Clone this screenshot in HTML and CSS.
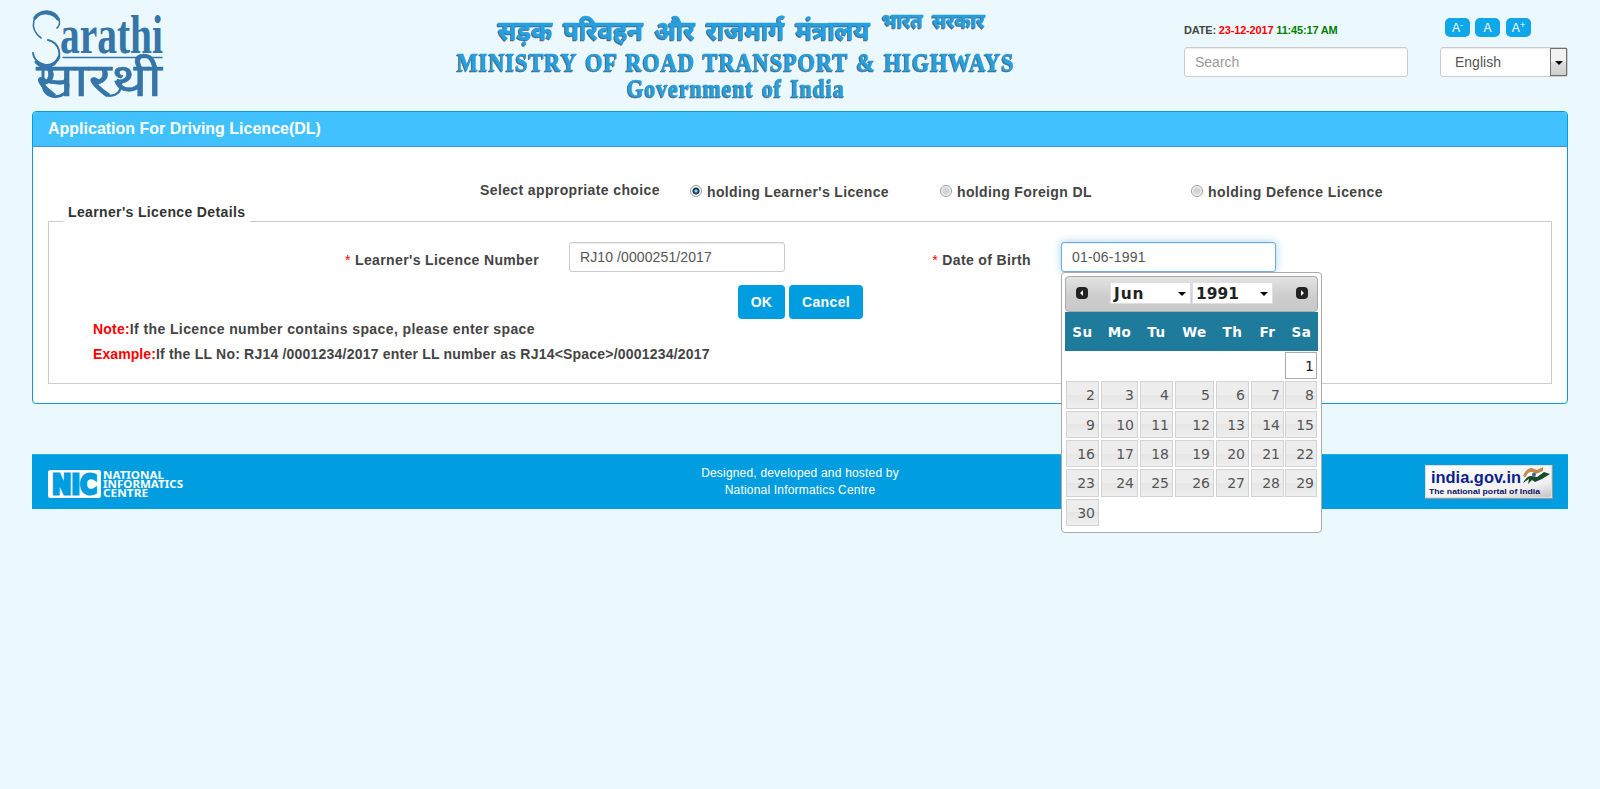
FILE: index.html
```html
<!DOCTYPE html>
<html lang="en">
<head>
<meta charset="utf-8">
<title>Application For Driving Licence(DL)</title>
<link rel="stylesheet" href="styles.css">
</head>
<body>
<header class="top">
  <svg class="logo" width="136" height="105" viewBox="28 0 136 105">
    <text class="logo-en" x="60" y="53" font-size="54" textLength="103" lengthAdjust="spacingAndGlyphs">arathi</text>
    <g fill="none" stroke="#3575a8" stroke-linecap="round">
      <path d="M57 28C62 25 60 12 47 11C33 11 28 28 41 38" stroke-width="1.6"/>
      <path d="M35 18C40 11 52 11 58 19" stroke-width="3.5"/>
      <path d="M48 40C60 43 62 56 56 61C47 70 34 62 33 53" stroke-width="2"/>
      <path d="M63 57.500H162" stroke-width="1.5"/>
      <path d="M36 62C43 70 54 68 59 57" stroke-width="3"/>
      <path d="M43 66V84C43 101 67 100 68 86Q68 82 65 80" stroke-width="3"/>
      <path d="M100 88C103 99 120 98 121 86Q121 82 118 80" stroke-width="2.5"/>
    </g>
    <text class="logo-hi" x="36" y="96" font-size="46" textLength="126" lengthAdjust="spacingAndGlyphs">सारथी</text>
  </svg>
  <svg class="ministry" width="570" height="104" viewBox="450 0 570 104">
    <text class="hindi" x="498" y="39.500" font-size="27" textLength="372" lengthAdjust="spacingAndGlyphs">सड़क परिवहन और राजमार्ग मंत्रालय</text>
    <text class="hindi" x="882" y="27.500" font-size="21" textLength="103" lengthAdjust="spacingAndGlyphs">भारत सरकार</text>
    <text class="latin" x="457" y="71" font-size="26" textLength="558" lengthAdjust="spacingAndGlyphs">MINISTRY OF ROAD TRANSPORT &amp; HIGHWAYS</text>
    <text class="latin" x="627" y="97" font-size="25" textLength="218" lengthAdjust="spacingAndGlyphs">Government of India</text>
  </svg>
  <div class="search">
    <div class="date">DATE: <span class="red">23-12-2017</span> <span class="green">11:45:17 AM</span></div>
    <div class="input placeholder">Search</div>
  </div>
  <div class="lang">
    <div class="sizes"><span>A<sup>-</sup></span><span>A</span><span>A<sup>+</sup></span></div>
    <div class="select">English<span class="arrow"></span></div>
  </div>
</header>

<main class="panel">
  <h1 class="panel-title">Application For Driving Licence(DL)</h1>
  <div class="panel-body">
    <div class="choices">
      <span class="question">Select appropriate choice</span>
      <label class="choice"><i class="radio on"></i>holding Learner's Licence</label>
      <label class="choice"><i class="radio"></i>holding Foreign DL</label>
      <label class="choice defence"><i class="radio"></i>holding Defence Licence</label>
    </div>
    <section class="details">
      <h2 class="legend"><span>Learner's Licence Details</span></h2>
      <div class="fields">
        <span class="label"><b>*</b> Learner's Licence Number</span>
        <div class="input number">RJ10 /0000251/2017</div>
        <span class="label"><b>*</b> Date of Birth</span>
        <div class="input focus">01-06-1991
          <div class="picker">
            <div class="picker-head">
              <svg width="12" height="12" viewBox="0 0 12 12"><rect width="12" height="12" rx="4" fill="#222"/><path d="M7 3L4 6L7 9Z" fill="#fff"/></svg>
              <span class="drop month">Jun</span><span class="drop">1991</span>
              <svg width="12" height="12" viewBox="0 0 12 12"><rect width="12" height="12" rx="4" fill="#222"/><path d="M5 3L8 6L5 9Z" fill="#fff"/></svg>
            </div>
            <div class="week"><span>Su</span><span>Mo</span><span>Tu</span><span>We</span><span>Th</span><span>Fr</span><span>Sa</span></div>
            <div class="days">
              <a class="first">1</a>
              <a>2</a><a>3</a><a>4</a><a>5</a><a>6</a><a>7</a><a>8</a>
              <a>9</a><a>10</a><a>11</a><a>12</a><a>13</a><a>14</a><a>15</a>
              <a>16</a><a>17</a><a>18</a><a>19</a><a>20</a><a>21</a><a>22</a>
              <a>23</a><a>24</a><a>25</a><a>26</a><a>27</a><a>28</a><a>29</a>
              <a>30</a>
            </div>
          </div>
        </div>
      </div>
      <div class="buttons"><span class="ok">OK</span><span class="cancel">Cancel</span></div>
      <p class="note"><span class="red">Note:</span>If the Licence number contains space, please enter space</p>
      <p class="note example"><span class="red">Example:</span>If the LL No: RJ14 /0001234/2017 enter LL number as RJ14&lt;Space&gt;/0001234/2017</p>
    </section>
  </div>
</main>

<footer class="footer">
  <svg class="nic" width="140" height="36" viewBox="47 466 140 36">
    <rect x="48" y="470" width="53" height="28" rx="2.5" fill="#fff"/>
    <text class="nic-mark" x="52" y="493.500" font-size="26" textLength="45" lengthAdjust="spacingAndGlyphs">NIC</text>
    <g class="nic-name" font-size="10.5">
      <text x="103" y="478.5" textLength="61" lengthAdjust="spacingAndGlyphs">NATIONAL</text>
      <text x="103" y="487.5" textLength="80" lengthAdjust="spacingAndGlyphs">INFORMATICS</text>
      <text x="103" y="496.7" textLength="45" lengthAdjust="spacingAndGlyphs">CENTRE</text>
    </g>
  </svg>
  <div class="credit">Designed, developed and hosted by<br>National Informatics Centre</div>
  <svg class="portal" width="128" height="34" viewBox="1425 465 128 34">
    <defs><linearGradient id="silver" x1="0" y1="0" x2="1" y2="1"><stop offset="0" stop-color="#fff"/><stop offset=".75" stop-color="#f0f0f0"/><stop offset="1" stop-color="#c4c4c4"/></linearGradient></defs>
    <rect x="1425" y="465" width="128" height="34" fill="#999"/>
    <rect x="1425" y="465" width="127" height="33" fill="#ddd"/>
    <rect x="1426" y="466" width="125" height="31" rx="2" fill="url(#silver)"/>
    <text class="portal-name" x="1431" y="483" font-size="17" textLength="90" lengthAdjust="spacingAndGlyphs">india.gov.in</text>
    <text class="portal-sub" x="1429" y="494" font-size="8" textLength="111" lengthAdjust="spacingAndGlyphs">The national portal of India</text>
    <path d="M1523 476Q1526 468 1532 468L1537 470L1543 467V471L1536 474L1531 472Q1528 473 1526 478Z" fill="#c98a4c"/>
    <path d="M1525 478Q1528 471 1532 472L1537 474L1544 471V474L1537 478L1532 476L1527 480Z" fill="#fff"/>
    <circle cx="1534" cy="474.500" r="2" fill="#4860a0"/>
    <path d="M1523 483Q1527 475 1532 476L1537 477L1544 472L1550 474L1542 479L1535 482L1532 480L1528 484L1529 479Z" fill="#174c2c"/>
  </svg>
</footer>
</body>
</html>
```
FILE: styles.css
```css
* { box-sizing: border-box; }
body {
  margin: 0;
  padding: 0 32px;
  height: 789px;
  background: #ebf9ff;
  color: #444;
  font: 14px/20px "Liberation Sans", Arial, sans-serif;
}
svg { overflow: visible; }
.red { color: #f00; }
.green { color: #008000; }

/* Page header */
.top {
  height: 111px;
  display: grid;
  grid-template-columns: 418px 734px 256px 128px;
}
.logo { margin: 0 0 0 -4px; }
.logo text { fill: #3575a8; }
.logo-en { font-family: "Liberation Serif", serif; font-weight: bold; }
.logo-hi { font-family: "Noto Sans Devanagari", "Liberation Serif", serif; font-weight: normal; stroke: #3575a8; stroke-width: .6px; }
.ministry text { fill: #25a0e0; stroke: #25a0e0; stroke-width: .4px; filter: drop-shadow(-1px 1px .6px #567); }
.hindi { font-family: "Noto Sans Devanagari", "Liberation Sans", sans-serif; font-weight: bold; word-spacing: 5px; }
.latin { font-family: "Liberation Serif", serif; font-weight: bold; letter-spacing: 1.2px; word-spacing: 2px; }
.date {
  margin-top: 20px;
  height: 27px;
  font-size: 11px;
  font-weight: bold;
  letter-spacing: -.17px;
  white-space: nowrap;
}
.input, .select {
  height: 30px;
  padding: 0 10px;
  border: 1px solid #ccc;
  border-radius: 3px;
  background: #fff;
  box-shadow: inset 0 1px 1px rgba(0, 0, 0, .075);
  color: #555;
  line-height: 28px;
}
.placeholder { width: 224px; color: #999; }
.sizes { display: flex; gap: 5px; padding: 18px 0 10px 5px; }
.sizes span {
  width: 25px;
  height: 19px;
  border-radius: 5px;
  background: #0ea7e9;
  color: #fff;
  font-size: 12px;
  line-height: 20px;
  text-align: center;
}
.sizes span:last-child { margin-left: 1px; }
.sizes sup { font-size: 9px; line-height: 0; vertical-align: 4px; }
.select {
  display: flex;
  justify-content: space-between;
  padding: 0 0 0 14px;
}
.arrow {
  width: 17px;
  height: 28px;
  border: 1px solid #707070;
  background: linear-gradient(#f2f2f2 50%, #ddd 50%, #cfcfcf);
}
.arrow::after {
  content: "";
  display: block;
  margin: 12px 0 0 4px;
  width: 0;
  border: 4px solid transparent;
  border-top: 4px solid #000;
  border-bottom: 0;
}

/* Application panel */
.panel {
  height: 293px;
  border: 1px solid #0d9bdc;
  border-radius: 4px;
  background: #fff;
  font-weight: bold;
  letter-spacing: .36px;
}
.panel-title {
  margin: 0;
  height: 35px;
  padding-left: 15px;
  border-bottom: 1px solid #3a94d0;
  border-radius: 3px 3px 0 0;
  background: #41c2ff;
  color: #fff;
  font-size: 16px;
  line-height: 33px;
  letter-spacing: 0;
}
.panel-body { padding: 33px 15px 0; }
.choices {
  display: grid;
  grid-template-columns: 210px 250px 251px 1fr;
  padding-left: 432px;
  height: 41px;
  line-height: 21px;
}
.question { letter-spacing: .38px; }
.choice { display: flex; padding-top: 2px; }
.defence { letter-spacing: .44px; }
.radio {
  width: 12px;
  height: 12px;
  margin: 3px 5px 0 0;
  border: 1px solid #999;
  border-radius: 50%;
  background: radial-gradient(circle, #d2d4d8 0 3px, #fff 5px);
}
.radio.on { background: radial-gradient(circle at 50% 50%, #8bd2f2 0 1px, #16537c 2px, #103040 3px, #fff 4px); }
.details {
  height: 163px;
  border: 1px solid #ccc;
}
.legend { margin: -20px 0 0 14px; font-size: 14px; line-height: 20px; color: #333; }
.legend span { display: inline-block; width: 187px; height: 21px; padding-left: 5px; background: #fff; vertical-align: top; }
.fields {
  display: grid;
  grid-template-columns: 520px 216px 276px 215px;
  margin-top: 19px;
  height: 30px;
}
.label { padding: 8px 30px 0 0; text-align: right; }
.label b { color: #f00; font-weight: normal; }
.fields .input { font-weight: normal; letter-spacing: .2px; }
.fields .number { letter-spacing: .1px; }
.fields .focus {
  position: relative;
  border-color: #66afe9;
  box-shadow: inset 0 1px 1px rgba(0, 0, 0, .075), 0 0 8px rgba(102, 175, 233, .6);
}
.buttons { display: flex; gap: 4px; margin: 13px 0 0 689px; }
.buttons span {
  height: 34px;
  border-radius: 4px;
  background: #009ee0;
  color: #fff;
  line-height: 34px;
  text-align: center;
}
.ok { width: 47px; }
.cancel { width: 74px; }
.note { margin: 0 0 5px 44px; letter-spacing: .4px; }
.note .red { letter-spacing: .2px; }
.example { letter-spacing: .21px; }
.example .red { letter-spacing: .08px; }

/* Date picker */
.picker {
  position: absolute;
  left: -1px;
  top: 29px;
  width: 261px;
  height: 261px;
  padding: 3px;
  border: 1px solid #aaa;
  border-radius: 4px;
  background: #fff;
  font: 15.4px/24px "DejaVu Sans", Verdana, sans-serif;
  letter-spacing: 0;
}
.picker-head {
  display: flex;
  align-items: center;
  height: 36px;
  padding: 0 9px 2px 10px;
  border: 1px solid #aaa;
  border-radius: 4px;
  background: linear-gradient(#e3e3e3, #ccc 60%, #cacaca);
}
.drop {
  display: flex;
  align-items: center;
  justify-content: space-between;
  width: 81px;
  height: 22px;
  padding: 2px 4px 0 3px;
  border: 1px solid #dde;
  background: #fff;
  color: #222;
  font-weight: bold;
}
.drop::after {
  content: "";
  border: 4px solid transparent;
  border-top: 4px solid #000;
  border-bottom: 0;
}
.month { margin: 0 1px 0 22px; letter-spacing: .9px; }
.picker-head svg:last-child { margin-left: auto; }
.week, .days { display: grid; grid-template-columns: 35px 39px 35px 41px 35px 35px 33px; }
.week {
  height: 39px;
  background: #1f7b9b;
  color: #fff;
  font-size: 13.5px;
  font-weight: bold;
  line-height: 40px;
  letter-spacing: .5px;
  text-align: center;
}
.days { grid-auto-rows: 29.35px; }
.days a {
  margin: 1px;
  padding-right: 3px;
  border: 1px solid #d3d3d3;
  background: linear-gradient(#ededed 50%, #e6e6e6 50%, #efefef);
  color: #555;
  font-size: 14px;
  line-height: 26px;
  text-align: right;
}
.days a:nth-child(7n + 1) { margin-left: 0; padding-right: 2px; }
.days .first { grid-column: 7; border-color: #aaa; background: #fff; color: #212121; }

/* Footer */
.footer {
  display: grid;
  grid-template-columns: 200px 1fr 200px;
  margin-top: 50px;
  height: 55px;
  border-top: 1px solid #1fb0ef;
  background: #009ee0;
  color: #fff;
}
.nic { margin: 11px 0 0 15px; }
.nic-mark { fill: #009ee0; stroke: #009ee0; stroke-width: 3; font-family: "DejaVu Sans", sans-serif; font-weight: bold; }
.nic-name { fill: #fff; font-family: "Noto Sans", "Open Sans", sans-serif; font-weight: bold; }
.credit { padding-top: 10px; font-size: 12px; line-height: 17px; letter-spacing: .19px; text-align: center; }
.portal { justify-self: end; margin: 10px 15px 0 0; }
.portal-name { fill: #0c1e8c; font-family: "Liberation Sans", sans-serif; font-weight: bold; }
.portal-sub { fill: #101060; font-family: "Liberation Sans", sans-serif; font-weight: bold; }
```
